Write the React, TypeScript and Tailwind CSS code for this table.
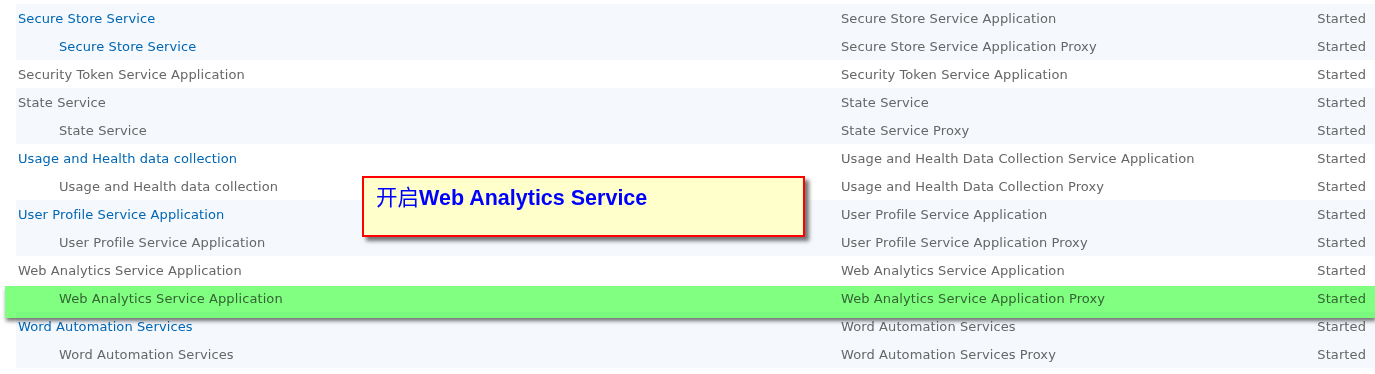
import React from 'react';

type Row = { name: string; type: string; link?: boolean; child?: boolean };

const GROUPS: Row[][] = [
  [
    { name: 'Secure Store Service', type: 'Secure Store Service Application', link: true },
    { name: 'Secure Store Service', type: 'Secure Store Service Application Proxy', link: true, child: true },
  ],
  [{ name: 'Security Token Service Application', type: 'Security Token Service Application' }],
  [
    { name: 'State Service', type: 'State Service' },
    { name: 'State Service', type: 'State Service Proxy', child: true },
  ],
  [
    { name: 'Usage and Health data collection', type: 'Usage and Health Data Collection Service Application', link: true },
    { name: 'Usage and Health data collection', type: 'Usage and Health Data Collection Proxy', child: true },
  ],
  [
    { name: 'User Profile Service Application', type: 'User Profile Service Application', link: true },
    { name: 'User Profile Service Application', type: 'User Profile Service Application Proxy', child: true },
  ],
  [
    { name: 'Web Analytics Service Application', type: 'Web Analytics Service Application' },
    { name: 'Web Analytics Service Application', type: 'Web Analytics Service Application Proxy', child: true },
  ],
  [
    { name: 'Word Automation Services', type: 'Word Automation Services', link: true },
    { name: 'Word Automation Services', type: 'Word Automation Services Proxy', child: true },
  ],
];

const ServiceRow: React.FC<{ row: Row }> = ({ row }) => (
  <div className="grid grid-cols-[825px_1fr_auto] h-[28px] pt-[2px] items-center">
    <span
      className={`${row.child ? 'pl-[43px]' : 'pl-[2px]'} ${row.link ? 'text-[#0066b3]' : 'text-[#666666]'}`}
    >
      {row.name}
    </span>
    <span className="text-[#666666]">{row.type}</span>
    <span className="text-[#666666] pr-[9px]">Started</span>
  </div>
);

export default function App() {
  return (
    <div
      className="relative w-[1375px] h-[374px] bg-white overflow-hidden text-[13px] tracking-[0.1px]"
      style={{ fontFamily: '"DejaVu Sans", Verdana, sans-serif' }}
    >
      <div className="pt-[4px] pl-[16px]">
        {GROUPS.map((group, i) => (
          <div key={i} className={i % 2 === 0 ? 'bg-[#f5f9fe]' : 'bg-white'}>
            {group.map((row, j) => (
              <ServiceRow key={j} row={row} />
            ))}
          </div>
        ))}
      </div>

      {/* highlight over the web analytics proxy row */}
      <div className="absolute left-[5px] right-0 top-[286px] h-[32px] bg-[#80ff80] mix-blend-multiply shadow-[1px_3px_4px_rgba(0,0,0,0.55)]" />

      {/* callout */}
      <div className="absolute left-[362px] top-[176px] w-[443px] h-[61px] border-2 border-[#ff0000] bg-[#ffffcc] shadow-[4px_4px_4px_rgba(0,0,0,0.55)] pl-[12px] pt-[7px]">
        <p className="text-[21.5px] leading-[21px] text-[#0000ff] tracking-normal whitespace-nowrap">
          <span style={{ fontFamily: '"Noto Sans CJK SC", sans-serif' }}>开启</span>
          <span className="font-bold" style={{ fontFamily: '"Liberation Sans", Arial, sans-serif' }}>
            Web Analytics Service
          </span>
        </p>
      </div>
    </div>
  );
}
